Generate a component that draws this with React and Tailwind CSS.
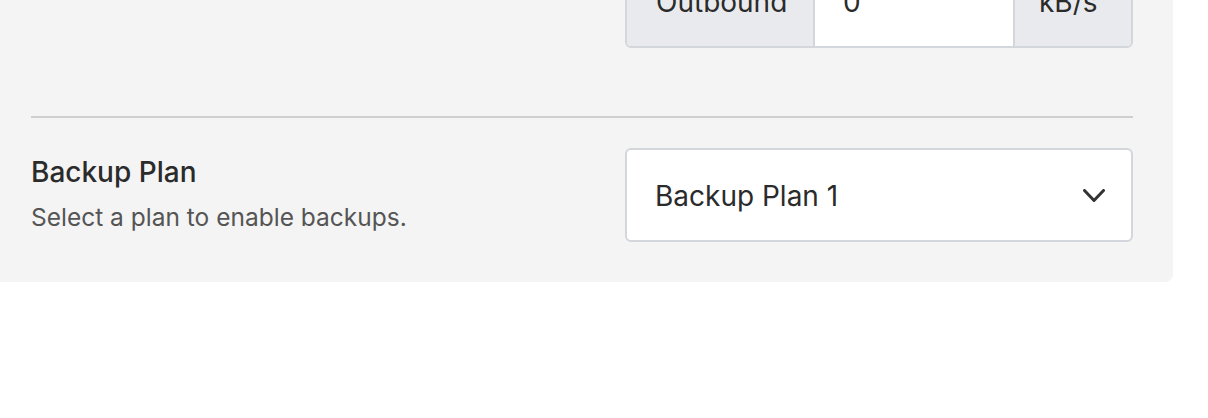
export default function App() {
  return (
    <div className="min-h-screen bg-white font-['Inter',sans-serif] text-[#2b2b2b]">
      <div className="w-[1173px] -mt-[45px] rounded-br-lg bg-[#f4f4f4] pl-[31px] pr-[40px] pb-[40px]">
        {/* bandwidth row (label scrolled out of view) */}
        <div className="flex justify-end">
          <div className="flex h-[93px] w-[508px] overflow-hidden rounded-md border-2 border-[#d3d6db] text-[28px]">
            <div className="flex w-[188px] items-center bg-[#e9eaed] px-[29px] border-r-2 border-[#d3d6db]">Outbound</div>
            <div className="flex flex-1 items-center bg-white px-[28px]">0</div>
            <div className="flex w-[118px] items-center bg-[#e9eaed] px-[24px] border-l-2 border-[#d3d6db]">kB/s</div>
          </div>
        </div>

        <div className="mt-[68px] border-t-2 border-[#cfcfcf]" />

        <div className="mt-[30px] flex items-center justify-between">
          <div className="pb-[4px]">
            <div className="text-[28px] font-medium leading-[34px] text-[#2b2b2b]">Backup Plan</div>
            <div className="mt-[13px] text-[24.5px] leading-[30px] text-[#555555]">Select a plan to enable backups.</div>
          </div>
          <div className="flex h-[94px] w-[508px] items-center justify-between rounded-md border-2 border-[#d3d6db] bg-white pl-[28px] pr-[26px] pt-[2px] text-[28px]">
            <span>Backup Plan 1</span>
            <svg width="22" height="14" viewBox="0 0 22 14" fill="none">
              <polyline points="1.5,1.5 11,11.5 20.5,1.5" stroke="#333" strokeWidth="3" strokeLinecap="round" strokeLinejoin="round" />
            </svg>
          </div>
        </div>
      </div>
    </div>
  )
}
